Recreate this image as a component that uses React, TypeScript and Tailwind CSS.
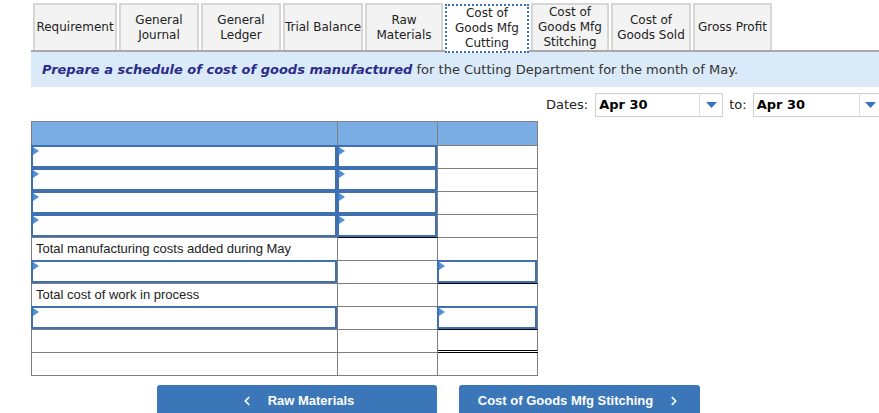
import { ChevronLeft, ChevronRight } from "lucide-react";

const tabs = [
  { label: ["Requirement"], w: "w-[84px]" },
  { label: ["General", "Journal"], w: "w-[80px]" },
  { label: ["General", "Ledger"], w: "w-[80px]" },
  { label: ["Trial Balance"], w: "w-[80px]" },
  { label: ["Raw", "Materials"], w: "w-[78px]" },
  { label: ["Cost of", "Goods Mfg", "Cutting"], w: "w-[84px]", active: true },
  { label: ["Cost of", "Goods Mfg", "Stitching"], w: "w-[78px]" },
  { label: ["Cost of", "Goods Sold"], w: "w-[80px]" },
  { label: ["Gross Profit"], w: "w-[79px]" },
];

type Cell = { input?: boolean; text?: string; extra?: string };

const rows: Cell[][] = [
  [{ input: true }, { input: true }, {}],
  [{ input: true }, { input: true }, {}],
  [{ input: true }, { input: true }, {}],
  [{ input: true }, { input: true, extra: "border-b-black" }, {}],
  [{ text: "Total manufacturing costs added during May" }, {}, {}],
  [{ input: true }, {}, { input: true, extra: "border-b-black" }],
  [{ text: "Total cost of work in process" }, {}, {}],
  [{ input: true }, {}, { input: true, extra: "border-b-black" }],
  [{}, {}, { extra: "border-b-[3px] border-double border-b-black" }],
  [{}, {}, {}],
];

const colW = ["w-[306px]", "w-[100px]", "w-[100px]"];

const Tab = ({ label, w, active }: { label: string[]; w: string; active?: boolean }) => (
  <div
    className={
      active
        ? `${w} h-[49px] -mb-[2px] mt-[1px] border-2 border-dotted border-[#3b6fb6] bg-white flex flex-col items-center justify-center leading-[15px] relative z-10`
        : `${w} h-[47px] border-2 border-b-0 border-[#d6d6d6] bg-[#f3f3f3] flex flex-col items-center justify-center leading-[15px]`
    }
  >
    {label.map((l) => (
      <span key={l} className="whitespace-nowrap">
        {l}
      </span>
    ))}
  </div>
);

const Select = ({ w }: { w: string }) => (
  <div className={`${w} h-[24px] border border-[#cfcfcf] bg-white flex shrink-0`}>
    <div className="flex-1 pl-[3px] flex items-center font-bold text-[13px] text-black">Apr 30</div>
    <div className="w-[23px] border-l border-[#dedede] flex items-center justify-center">
      <svg width="11" height="6" viewBox="0 0 11 6">
        <path d="M0 0 L11 0 L5.5 6 Z" fill="#3b72bf" />
      </svg>
    </div>
  </div>
);

const InputBox = () => (
  <div className="absolute inset-0 -left-px -top-px border-2 border-[#3f70af]">
    <svg className="absolute left-0 top-0" width="6" height="8" viewBox="0 0 6 8">
      <path d="M0 0 L6 4 L0 8 Z" fill="#5090d8" />
    </svg>
  </div>
);

export default function App() {
  return (
    <div className="w-[879px] h-[413px] overflow-hidden bg-white pl-[31px] font-['DejaVu_Sans',sans-serif] text-[12px] text-[#222]">
      <div className="pt-[3px] pl-[2px] flex gap-[2px] items-start border-b-2 border-[#a9a9a9] h-[52px] box-border">
        {tabs.map((t) => (
          <Tab key={t.label.join(" ")} {...t} />
        ))}
      </div>

      <div className="h-[35px] bg-[#dbeaf8] pl-[11px] flex items-center text-[13px] text-[#333]">
        <span className="font-bold italic text-[#2c2c88]">Prepare a schedule of cost of goods manufactured</span>
        <span>&nbsp;for the Cutting Department for the month of May.</span>
      </div>

      <div className="mt-[6px] pl-[515px] flex items-center text-[13px] text-[#222]">
        <span className="mr-[7px]">Dates:</span>
        <Select w="w-[128px]" />
        <span className="ml-[6px] mr-[6px]">to:</span>
        <Select w="w-[130px]" />
      </div>

      <div className="mt-[4px] w-[507px] border-l border-t border-[#7f7f7f] font-['Liberation_Sans',Arial,sans-serif] text-[13px] text-[#222]">
        <div className="flex">
          {colW.map((w) => (
            <div key={w + "h"} className={`${w} h-[24px] box-border bg-[#79ade3] border-r border-b border-[#7f7f7f]`} />
          ))}
        </div>
        {rows.map((r, i) => (
          <div key={i} className="flex">
            {r.map((c, j) => (
              <div
                key={j}
                className={`${colW[j]} h-[23px] box-border border-r border-b border-[#7f7f7f] relative flex items-center pl-[4px] ${c.extra ?? ""}`}
              >
                {c.input && <InputBox />}
                {c.text && <span className="whitespace-nowrap">{c.text}</span>}
              </div>
            ))}
          </div>
        ))}
      </div>

      <div className="mt-[9px] pl-[126px] flex gap-[22px] font-['Liberation_Sans',Arial,sans-serif] text-[13px] font-bold text-white">
        <div className="w-[280px] h-[32px] rounded-t-[3px] bg-[#3b76b8] flex items-center justify-center gap-[14px]">
          <ChevronLeft size={14} strokeWidth={3} />
          <span>Raw Materials</span>
        </div>
        <div className="w-[241px] h-[32px] rounded-t-[3px] bg-[#3b76b8] flex items-center justify-center gap-[14px]">
          <span>Cost of Goods Mfg Stitching</span>
          <ChevronRight size={14} strokeWidth={3} />
        </div>
      </div>
    </div>
  );
}
